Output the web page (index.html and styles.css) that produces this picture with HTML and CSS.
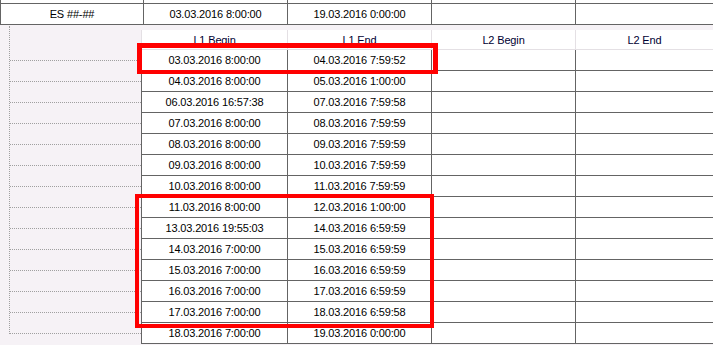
FILE: index.html
```html
<!DOCTYPE html>
<html>
<head>
<meta charset="utf-8">
<link rel="stylesheet" href="styles.css">
</head>
<body>
<div class="master">
  <div class="mrow mrow-prev">
    <div class="mc"></div><div class="mc"></div><div class="mc"></div><div class="mc"></div><div class="mc"></div>
  </div>
  <div class="mrow mrow-main">
    <div class="mc">ES ##-##</div>
    <div class="mc">03.03.2016 8:00:00</div>
    <div class="mc">19.03.2016 0:00:00</div>
    <div class="mc"></div>
    <div class="mc"></div>
  </div>
</div>
<div class="detail">
  <div class="gutter">
    <div class="tree">
      <div class="branch"></div><div class="branch"></div><div class="branch"></div><div class="branch"></div>
      <div class="branch"></div><div class="branch"></div><div class="branch"></div><div class="branch"></div>
      <div class="branch"></div><div class="branch"></div><div class="branch"></div><div class="branch"></div>
      <div class="branch"></div><div class="branch branch-last"></div>
    </div>
  </div>
  <div class="child">
    <div class="crow chead"><div class="cc">L1 Begin</div><div class="cc">L1 End</div><div class="cc">L2 Begin</div><div class="cc">L2 End</div></div>
    <div class="crow"><div class="cc">03.03.2016 8:00:00</div><div class="cc">04.03.2016 7:59:52</div><div class="cc"></div><div class="cc"></div></div>
    <div class="crow"><div class="cc">04.03.2016 8:00:00</div><div class="cc">05.03.2016 1:00:00</div><div class="cc"></div><div class="cc"></div></div>
    <div class="crow"><div class="cc">06.03.2016 16:57:38</div><div class="cc">07.03.2016 7:59:58</div><div class="cc"></div><div class="cc"></div></div>
    <div class="crow"><div class="cc">07.03.2016 8:00:00</div><div class="cc">08.03.2016 7:59:59</div><div class="cc"></div><div class="cc"></div></div>
    <div class="crow"><div class="cc">08.03.2016 8:00:00</div><div class="cc">09.03.2016 7:59:59</div><div class="cc"></div><div class="cc"></div></div>
    <div class="crow"><div class="cc">09.03.2016 8:00:00</div><div class="cc">10.03.2016 7:59:59</div><div class="cc"></div><div class="cc"></div></div>
    <div class="crow"><div class="cc">10.03.2016 8:00:00</div><div class="cc">11.03.2016 7:59:59</div><div class="cc"></div><div class="cc"></div></div>
    <div class="crow"><div class="cc">11.03.2016 8:00:00</div><div class="cc">12.03.2016 1:00:00</div><div class="cc"></div><div class="cc"></div></div>
    <div class="crow"><div class="cc">13.03.2016 19:55:03</div><div class="cc">14.03.2016 6:59:59</div><div class="cc"></div><div class="cc"></div></div>
    <div class="crow"><div class="cc">14.03.2016 7:00:00</div><div class="cc">15.03.2016 6:59:59</div><div class="cc"></div><div class="cc"></div></div>
    <div class="crow"><div class="cc">15.03.2016 7:00:00</div><div class="cc">16.03.2016 6:59:59</div><div class="cc"></div><div class="cc"></div></div>
    <div class="crow"><div class="cc">16.03.2016 7:00:00</div><div class="cc">17.03.2016 6:59:59</div><div class="cc"></div><div class="cc"></div></div>
    <div class="crow"><div class="cc">17.03.2016 7:00:00</div><div class="cc">18.03.2016 6:59:58</div><div class="cc"></div><div class="cc"></div></div>
    <div class="crow"><div class="cc">18.03.2016 7:00:00</div><div class="cc">19.03.2016 0:00:00</div><div class="cc"></div><div class="cc"></div></div>
  </div>
</div>
<div class="mark mark-1"></div>
<div class="mark mark-2"></div>
</body>
</html>
```
FILE: styles.css
```css
html, body {
  margin: 0;
  padding: 0;
  background: #ffffff;
}
body {
  font-family: "Liberation Sans", Arial, sans-serif;
  font-size: 11px;
  letter-spacing: -0.15px;
  color: #000000;
  width: 713px;
  height: 345px;
  overflow: hidden;
}
.mrow {
  display: grid;
  grid-template-columns: 143px 144px 144px 144px 1fr;
  background: #ffffff;
}
.mc {
  border-left: 1px solid #646464;
}
.mrow-prev {
  height: 3px;
}
.mrow-main {
  box-sizing: border-box;
  height: 22px;
  border-top: 1px solid #646464;
  border-bottom: 1px solid #646464;
}
.mrow-main .mc {
  display: flex;
  align-items: center;
  justify-content: center;
}
.detail {
  display: flex;
  height: 320px;
  background: #f6f2f6;
}
.gutter {
  flex: none;
  width: 141px;
  padding-top: 1px;
}
.tree {
  margin-left: 9px;
  border-left: 1px dotted #a0a0a0;
  padding-top: 34px;
}
.branch {
  box-sizing: border-box;
  height: 21px;
  border-top: 1px dotted #a0a0a0;
}
.branch-last {
  height: 1px;
}
.child {
  flex: 1;
  margin-top: 5px;
}
.crow {
  display: grid;
  grid-template-columns: 146px 144px 144px 1fr;
  box-sizing: border-box;
  height: 21px;
  border-bottom: 1px solid #646464;
  background: #ffffff;
}
.cc {
  border-left: 1px solid #646464;
  display: flex;
  align-items: center;
  justify-content: center;
}
.chead {
  height: 20px;
  border-bottom: 1px solid #e4e0e4;
}
.chead .cc {
  border-left: 1px solid #e4e0e4;
  color: #000033;
}
.mark {
  position: absolute;
  box-sizing: border-box;
  border: 4px solid #ff0000;
}
.mark-1 {
  left: 137px;
  top: 43px;
  width: 301px;
  height: 31px;
  border-width: 5px 5px 4px 5px;
}
.mark-2 {
  left: 135px;
  top: 194px;
  width: 299px;
  height: 134px;
}
```
